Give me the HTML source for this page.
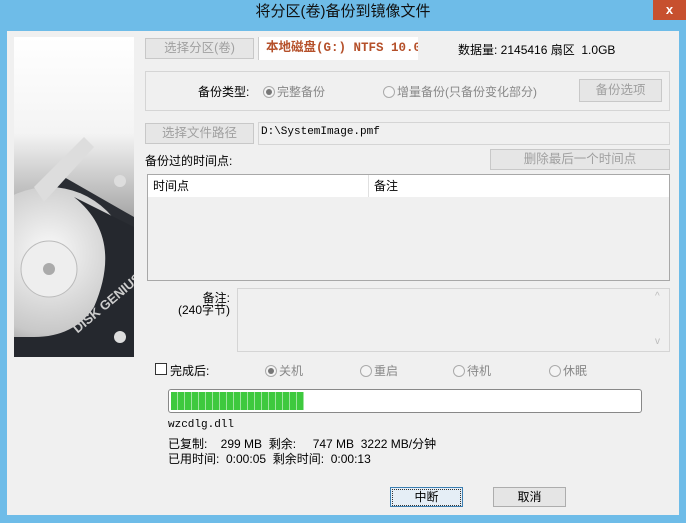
<!DOCTYPE html>
<html><head><meta charset="utf-8"><style>
*{margin:0;padding:0;box-sizing:border-box}
body{width:686px;height:523px;background:#6ebce8;font-family:"Liberation Sans","Noto Sans CJK SC","WenQuanYi Zen Hei",sans-serif;font-size:12px;color:#000;position:relative;overflow:hidden}
.a{position:absolute}
#title{left:0;top:0;width:686px;height:30px;text-align:center;line-height:24px;font-size:15px;color:#111}
#close{left:653px;top:0;width:33px;height:20px;background:#c7502f;color:#fff;text-align:center;line-height:19px;font-size:13px;font-weight:bold}
#client{left:7px;top:31px;width:672px;height:484px;background:#f0f0f0}
.btn{position:absolute;background:#e6e6e6;border:1px solid #c8c8c8;color:#a0a0a0;text-align:center;font-size:12.5px}
.box{position:absolute;border:1px solid #d5d5d5}
.radio{display:inline-block;width:12px;height:12px;border:1px solid #aaa;border-radius:50%;background:#f4f4f4;vertical-align:-2px;margin-right:2px;position:relative}
.radio.on::after{content:"";position:absolute;left:2px;top:2px;width:6px;height:6px;border-radius:50%;background:#777}
.g{color:#888}
</style></head><body>
<div class="a" id="title">将分区(卷)备份到镜像文件</div>
<div class="a" id="close">x</div>
<div class="a" id="client"></div>

<svg class="a" style="left:14px;top:37px" width="120" height="320" viewBox="0 0 120 320">
<defs>
<linearGradient id="bg" x1="0" y1="0" x2="0" y2="1"><stop offset="0" stop-color="#fff"/><stop offset="0.3" stop-color="#f4f4f4"/><stop offset="0.55" stop-color="#aaa"/><stop offset="1" stop-color="#333"/></linearGradient>
<radialGradient id="pl" cx="0.5" cy="0.4" r="0.7"><stop offset="0" stop-color="#fafafa"/><stop offset="0.7" stop-color="#c8c8c8"/><stop offset="1" stop-color="#888"/></radialGradient>
</defs>
<rect width="120" height="320" fill="url(#bg)"/>
<path d="M0 160 L50 140 L120 180 L120 320 L0 320 Z" fill="#2a2d33"/>
<circle cx="35" cy="232" r="82" fill="url(#pl)"/>
<path d="M60 160 Q110 200 80 270 Q60 300 20 300 L0 300 L0 320 L120 320 L120 190 Z" fill="#25282e"/>
<circle cx="35" cy="232" r="28" fill="#eee" stroke="#bbb"/>
<circle cx="35" cy="232" r="6" fill="#aaa"/>
<path d="M20 150 L70 100 L80 110 L30 165 Z" fill="#ddd"/>
<circle cx="106" cy="144" r="6" fill="#ddd"/><circle cx="106" cy="300" r="6" fill="#ddd"/>
<text x="52" y="295" transform="rotate(-40 60 280)" fill="#ccc" font-size="13" font-weight="bold" font-family="Liberation Sans">DISK GENIUS</text>
</svg>

<div class="btn" style="left:145px;top:38px;width:109px;height:21px;line-height:19px">选择分区(卷)</div>
<div class="a" style="left:258px;top:37px;width:160px;height:23px;background:#fff;border-left:1px solid #ccc;color:#b5502a;font-weight:bold;font-size:12.5px;line-height:22px;padding-left:7px;white-space:nowrap;overflow:hidden;font-family:'Liberation Mono','Noto Sans CJK SC',monospace">本地磁盘(G:) NTFS 10.0</div>
<div class="a" style="left:458px;top:41px;font-size:12px;white-space:nowrap">数据量: 2145416 扇区&nbsp;&nbsp;1.0GB</div>

<div class="box" style="left:145px;top:71px;width:525px;height:40px"></div>
<div class="a" style="left:198px;top:83px">备份类型:</div>
<div class="a" style="left:263px;top:83px" ><span class="radio on"></span><span class="g">完整备份</span></div>
<div class="a" style="left:383px;top:83px"><span class="radio"></span><span class="g">增量备份(只备份变化部分)</span></div>
<div class="btn" style="left:579px;top:79px;width:83px;height:23px;line-height:21px">备份选项</div>

<div class="btn" style="left:145px;top:123px;width:109px;height:21px;line-height:19px">选择文件路径</div>
<div class="box" style="left:258px;top:122px;width:412px;height:23px;background:#f0f0f0;font-family:'Liberation Mono',monospace;font-size:11px;padding:3px 0 0 2px">D:\SystemImage.pmf</div>
<div class="a" style="left:145px;top:152px">备份过的时间点:</div>
<div class="btn" style="left:490px;top:149px;width:180px;height:21px;line-height:19px">删除最后一个时间点</div>

<div class="a" style="left:147px;top:174px;width:523px;height:107px;border:1px solid #a8a8a8;background:#f0f0f0">
 <div style="height:22px;background:#fff;position:relative;line-height:22px">
  <span style="position:absolute;left:5px">时间点</span>
  <span style="position:absolute;left:220px;top:0;height:22px;border-left:1px solid #e0e0e0"></span>
  <span style="position:absolute;left:226px">备注</span>
 </div>
</div>

<div class="a" style="left:170px;top:292px;width:60px;text-align:right;line-height:12px">备注:<br>(240字节)</div>
<div class="box" style="left:237px;top:288px;width:433px;height:64px;background:#f0f0f0"></div>
<div class="a g" style="left:655px;top:291px;font-size:10px;color:#bbb">^</div>
<div class="a g" style="left:655px;top:336px;font-size:10px;color:#bbb">v</div>

<div class="a" style="left:155px;top:363px;width:12px;height:12px;border:1px solid #333;background:#fff"></div>
<div class="a" style="left:170px;top:362px">完成后:</div>
<div class="a" style="left:265px;top:362px"><span class="radio on"></span><span class="g">关机</span></div>
<div class="a" style="left:360px;top:362px"><span class="radio"></span><span class="g">重启</span></div>
<div class="a" style="left:453px;top:362px"><span class="radio"></span><span class="g">待机</span></div>
<div class="a" style="left:549px;top:362px"><span class="radio"></span><span class="g">休眠</span></div>

<div class="a" style="left:168px;top:389px;width:474px;height:24px;border:1px solid #888;border-radius:3px;background:#fff;padding:2px">
 <div style="width:133px;height:18px;background:repeating-linear-gradient(90deg,#3ec93e 0 6px,#9fe59f 6px 7px)"></div>
</div>
<div class="a" style="left:168px;top:419px;font-family:'Liberation Mono',monospace;font-size:11px">wzcdlg.dll</div>
<div class="a" style="left:168px;top:437px;line-height:15px;white-space:pre;font-size:12px">已复制:    299 MB  剩余:     747 MB  3222 MB/分钟
已用时间:  0:00:05  剩余时间:  0:00:13</div>

<div class="a" style="left:390px;top:487px;width:73px;height:20px;border:1px solid #3c7fb1;background:#e5eef6;text-align:center;line-height:18px"><span style="border:1px dotted #333;display:block;margin:1px;line-height:15px">中断</span></div>
<div class="a" style="left:493px;top:487px;width:73px;height:20px;border:1px solid #adadad;background:#e5e5e5;text-align:center;line-height:18px">取消</div>
</body></html>
